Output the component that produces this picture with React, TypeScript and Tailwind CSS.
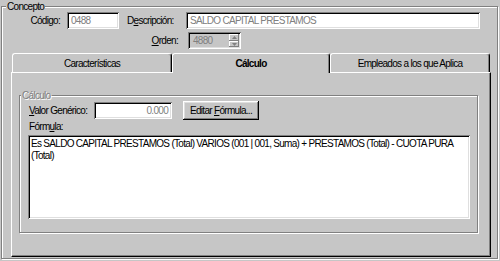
import React from "react";

const sunken =
  "shadow-[inset_1px_1px_0_#808080,inset_-1px_-1px_0_#ffffff,inset_2px_2px_0_#000000,inset_-2px_-2px_0_#dfdfdf]";
const raised =
  "shadow-[inset_-1px_-1px_0_#000000,inset_1px_1px_0_#ffffff,inset_-2px_-2px_0_#808080,inset_2px_2px_0_#dfdfdf]";
const smallRaised =
  "shadow-[inset_-1px_-1px_0_#808080,inset_1px_1px_0_#ffffff]";
const etched =
  "border border-[#808080] shadow-[inset_1px_1px_0_#ffffff,1px_1px_0_#ffffff]";

function Tri({ up }: { up?: boolean }) {
  return (
    <svg width="5" height="3" viewBox="0 0 5 3">
      {up ? (
        <polygon points="2.5,0 5,3 0,3" fill="#808080" />
      ) : (
        <polygon points="0,0 5,0 2.5,3" fill="#808080" />
      )}
    </svg>
  );
}

export default function App() {
  return (
    <div className="w-[500px] h-[261px] bg-[#c6c6c6] overflow-hidden text-[10px] tracking-[-0.7px] leading-[13px] text-black font-['Liberation_Sans',Arial,sans-serif]">
      <div className={`relative ml-[1px] mt-[6px] w-[497px] h-[253px] ${etched}`}>
        <span className="absolute left-[4px] top-[-7px] px-[1px] bg-[#c6c6c6]">Concepto</span>

        <div className="flex items-center h-[17px] mt-[5px]">
          <span className="w-[58px] text-right">Código:</span>
          <div className={`ml-[7px] w-[52px] h-[17px] bg-white ${sunken} text-[#808080] pl-[4px] flex items-center`}>
            0488
          </div>
          <span className="ml-[8px] w-[50px]">
            D<u>e</u>scripción:
          </span>
          <div className={`ml-[9px] w-[294px] h-[17px] bg-white ${sunken} text-[#808080] pl-[4px] flex items-center`}>
            SALDO CAPITAL PRESTAMOS
          </div>
        </div>

        <div className="flex items-center h-[17px] mt-[3px]">
          <span className="w-[176px] text-right">
            <u>O</u>rden:
          </span>
          <div className={`ml-[10px] w-[53px] h-[17px] bg-[#c6c6c6] ${sunken} flex p-[2px]`}>
            <span className="flex-1 pl-[3px] text-[#808080] flex items-center">4880</span>
            <div className="w-[10px] flex flex-col">
              <div className={`h-[7px] ${smallRaised} flex items-center justify-center`}>
                <Tri up />
              </div>
              <div className={`h-[6px] ${smallRaised} flex items-center justify-center`}>
                <Tri />
              </div>
            </div>
          </div>
        </div>

        <div className="ml-[9px] mt-[4px] w-[480px]">
          <div className="relative z-10 flex items-start h-[19px] ml-[1px]">
            <div className="w-[160px] h-[19px] border-t border-l border-white border-r border-r-black rounded-t-[3px] shadow-[inset_-1px_0_0_#808080] flex items-center justify-center">
              Características
            </div>
            <div className="w-[158px] h-[20px] bg-[#c6c6c6] border-t border-l border-white border-r border-r-black rounded-t-[3px] shadow-[inset_-1px_0_0_#808080] flex items-center justify-center font-bold pb-[1px]">
              Cálculo
            </div>
            <div className="w-[160px] h-[19px] border-t border-l border-white border-r border-r-black rounded-t-[3px] shadow-[inset_-1px_0_0_#808080] flex items-center justify-center">
              Empleados a los que Aplica
            </div>
          </div>

          <div className="h-[185px] border-t border-l border-white border-r border-b border-r-black border-b-black shadow-[inset_-1px_-1px_0_#808080]">
            <div className={`relative ml-[7px] mt-[22px] w-[459px] h-[138px] ${etched}`}>
              <span className="absolute left-[1px] top-[-7px] px-[1px] bg-[#c6c6c6] text-[#808080] [text-shadow:1px_1px_0_#ffffff]">
                Cálculo
              </span>

              <div className="flex items-center mt-[5px] ml-[9px] h-[18px]">
                <span className="w-[65px] whitespace-nowrap">
                  <u>V</u>alor Genérico:
                </span>
                <div className={`w-[78px] h-[17px] bg-white ${sunken} text-[#808080] pr-[4px] flex items-center justify-end`}>
                  0.000
                </div>
                <div className={`ml-[11px] w-[76px] h-[19px] ${raised} flex items-center justify-center whitespace-nowrap`}>
                  Editar&nbsp;<u>F</u>órmula...
                </div>
              </div>

              <div className="ml-[9px] mt-[1px] h-[13px]">
                Fórm<u>u</u>la:
              </div>

              <div className={`ml-[8px] mt-[2px] w-[442px] h-[84px] bg-white ${sunken} px-[3px] pt-[3px] leading-[12px]`}>
                Es SALDO CAPITAL PRESTAMOS (Total) VARIOS (001 | 001, Suma) + PRESTAMOS (Total) - CUOTA PURA (Total)
              </div>
            </div>
          </div>
        </div>
      </div>
    </div>
  );
}
